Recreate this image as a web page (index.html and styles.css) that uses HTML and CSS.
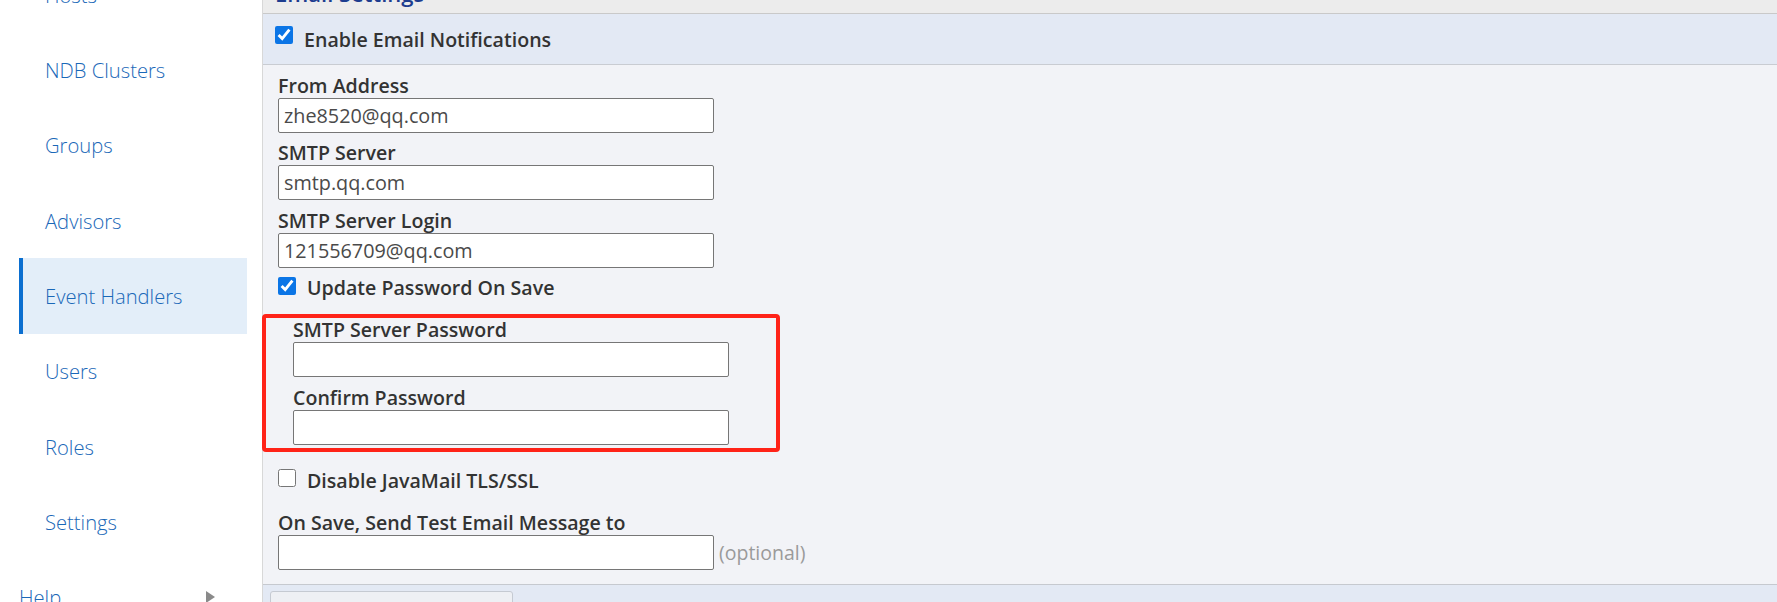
FILE: index.html
```html
<!DOCTYPE html>
<html lang="en">
  <head>
    <meta charset="UTF-8" />
    <meta name="viewport" content="width=device-width, initial-scale=1.0" />
    <title>Event Handlers - Email Settings</title>

    <link rel="stylesheet" href="styles.css">
  </head>
  <body>
    <div class="page">
      <nav class="sidebar">
        <ul class="nav">
          <li class="nav__item">Hosts</li>
          <li class="nav__item">NDB Clusters</li>
          <li class="nav__item">Groups</li>
          <li class="nav__item">Advisors</li>
          <li class="nav__item nav__item--active">Event Handlers</li>
          <li class="nav__item">Users</li>
          <li class="nav__item">Roles</li>
          <li class="nav__item">Settings</li>
        </ul>
        <div class="nav__section">
          Help
          <span class="nav__caret"></span>
        </div>
      </nav>

      <main class="panel">
        <div class="panel__title">Email Settings</div>

        <div class="panel__bar">
          <input type="checkbox" checked class="check" id="enable-email" />
          <label for="enable-email" class="check__label">Enable Email Notifications</label>
        </div>

        <form class="panel__body" action="#">
          <div class="field">
            <label for="from-address">From Address</label>
            <input type="text" id="from-address" class="input" value="zhe8520@qq.com" />
          </div>
          <div class="field">
            <label for="smtp-server">SMTP Server</label>
            <input type="text" id="smtp-server" class="input" value="smtp.qq.com" />
          </div>
          <div class="field">
            <label for="smtp-login">SMTP Server Login</label>
            <input type="text" id="smtp-login" class="input" value="121556709@qq.com" />
          </div>

          <div class="check-row">
            <input type="checkbox" checked class="check" id="update-password" />
            <label for="update-password" class="check__label">Update Password On Save</label>
          </div>

          <div class="password-box">
            <div class="field">
              <label for="smtp-password">SMTP Server Password</label>
              <input type="password" id="smtp-password" class="input" />
            </div>
            <div class="field">
              <label for="confirm-password">Confirm Password</label>
              <input type="password" id="confirm-password" class="input" />
            </div>
          </div>

          <div class="check-row check-row--spaced">
            <input type="checkbox" class="check" id="disable-tls" />
            <label for="disable-tls" class="check__label">Disable JavaMail TLS/SSL</label>
          </div>

          <div class="field field--spaced">
            <label for="test-email">On Save, Send Test Email Message to</label>
            <div class="field__row">
              <input type="text" id="test-email" class="input" />
              <span class="field__hint">(optional)</span>
            </div>
          </div>
        </form>

        <div class="panel__footer">
          <button class="btn" type="button"></button>
        </div>
      </main>
    </div>
  </body>
</html>
```

FILE: styles.css
```css
html,
body {
  margin: 0;
  height: 100%;
  overflow: hidden;
  font-family: "Open Sans", "Liberation Sans", sans-serif;
  color: #333;
  background: #f2f3f7;
}

/* page is scrolled a bit, top of the nav and title are cut off */
.page {
  display: flex;
  margin-top: -43px;
  min-height: 700px;
}

.sidebar {
  width: 263px;
  flex-shrink: 0;
  box-sizing: border-box;
  background: #fff;
  border-right: 1px solid #d8d8d8;
}

.nav {
  list-style: none;
  margin: 0;
  padding: 0 0 0 19px;
}

.nav__item {
  width: 228px;
  height: 75.33px;
  box-sizing: border-box;
  display: flex;
  align-items: center;
  padding-left: 22px;
  border-left: 4px solid transparent;
  font-size: 20.2px;
  font-weight: 300;
  color: #1a68b8;
}

.nav__item--active {
  background: #e3eef9;
  border-left-color: #0b6fd0;
}

.nav__section {
  height: 75px;
  display: flex;
  align-items: center;
  justify-content: space-between;
  width: 196px;
  padding-left: 19px;
  font-size: 20.2px;
  font-weight: 300;
  color: #1a68b8;
}

.nav__caret {
  width: 0;
  height: 0;
  border-top: 6px solid transparent;
  border-bottom: 6px solid transparent;
  border-left: 9px solid #8a8a8a;
}

.panel {
  flex: 1;
  background: #f2f3f7;
}

.panel__title {
  padding: 22px 12px 6px;
  font-size: 22px;
  line-height: 28px;
  font-weight: 600;
  color: #1d3d8f;
  background: linear-gradient(#dedede, #ececec 7px);
  border-bottom: 1px solid #c9c9c9;
}

.panel__bar {
  height: 51px;
  box-sizing: border-box;
  display: flex;
  align-items: flex-start;
  padding: 12px 12px 0;
  background: #e3e9f4;
  border-bottom: 1px solid #c9ccd2;
}

.panel__bar .check__label {
  margin-top: 1.5px;
}

.panel__body {
  padding: 0 15px 14px;
  border-bottom: 1px solid #c6c9cf;
}

.field label {
  display: block;
  margin-top: 8.5px;
  font-size: 19.6px;
  line-height: 24px;
  font-weight: 600;
  color: #333;
}

.field--spaced label {
  margin-top: 18px;
}

.field__row {
  display: flex;
  align-items: center;
  gap: 5px;
}

.field__hint {
  font-size: 19.5px;
  color: #9a9a9a;
}

.input {
  display: block;
  width: 436px;
  height: 35px;
  box-sizing: border-box;
  margin: 0;
  padding: 0 5px;
  border: 1px solid #767676;
  border-radius: 2px;
  background: #fff;
  font-family: inherit;
  font-size: 19.8px;
  color: #4a4a4a;
}

.check-row {
  display: flex;
  align-items: flex-start;
  margin-top: 8.5px;
}

.check-row--spaced {
  margin-top: 17px;
}

.check {
  width: 18px;
  height: 18px;
  margin: 0;
  flex-shrink: 0;
  accent-color: #0b75e6;
}

.check-row .check {
  margin-top: 0.5px;
}

.check__label {
  margin-left: 11px;
  font-size: 19.6px;
  line-height: 24px;
  font-weight: 600;
  color: #333;
}

.password-box {
  width: fit-content;
  margin: 14px 0 0 -16px;
  padding: 0 47px 3px 27px;
  border: 4px solid #ff2318;
  border-radius: 4px;
}

.password-box .field:first-child label {
  margin-top: 0;
}

.panel__footer {
  padding: 6px 7px;
  background: #e3e9f4;
}

.btn {
  display: block;
  width: 243px;
  height: 32px;
  background: #eef0f4;
  border: 1px solid #c5cad2;
  border-radius: 3px;
}
```
